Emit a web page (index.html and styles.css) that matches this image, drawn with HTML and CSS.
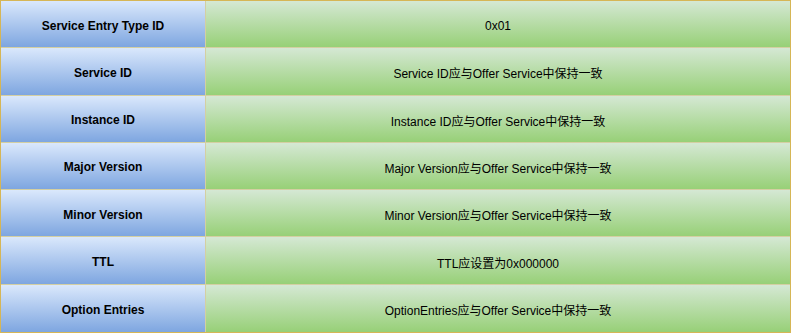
FILE: index.html
```html
<!DOCTYPE html>
<html>
<head>
<meta charset="utf-8">
<link rel="stylesheet" href="styles.css">
</head>
<body>
<div class="table">
  <div class="key">Service Entry Type ID</div><div class="val">0x01</div>
  <div class="key">Service ID</div><div class="val">Service ID应与Offer Service中保持一致</div>
  <div class="key">Instance ID</div><div class="val">Instance ID应与Offer Service中保持一致</div>
  <div class="key">Major Version</div><div class="val">Major Version应与Offer Service中保持一致</div>
  <div class="key">Minor Version</div><div class="val">Minor Version应与Offer Service中保持一致</div>
  <div class="key">TTL</div><div class="val">TTL应设置为0x000000</div>
  <div class="key last">Option Entries</div><div class="val last">OptionEntries应与Offer Service中保持一致</div>
</div>
</body>
</html>
```
FILE: styles.css
```css
html, body {
  margin: 0;
  padding: 0;
  background: #ffffff;
}
.table {
  box-sizing: border-box;
  width: 791px;
  height: 333px;
  border: 1px solid #d6b656;
  display: grid;
  grid-template-columns: 205px 1fr;
  grid-template-rows: repeat(7, 1fr);
  font-family: "Liberation Sans", Arial, "Noto Sans CJK SC", sans-serif;
  font-size: 12px;
  color: #000000;
}
.key, .val {
  box-sizing: border-box;
  display: flex;
  align-items: center;
  justify-content: center;
  padding-top: 3px;
  border-bottom: 1px solid #d4cfa2;
  min-height: 0;
}
.key {
  font-weight: bold;
  background: linear-gradient(to bottom, #dae8fc, #7ea6e0);
  border-right: 1px solid #d4cfa2;
}
.val {
  background: linear-gradient(to bottom, #d5e8d4, #97d077);
}
.last {
  border-bottom: none;
}
```
